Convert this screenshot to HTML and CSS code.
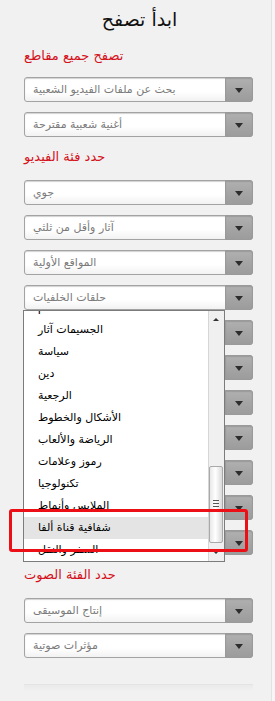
FILE: index.html
```html
<!DOCTYPE html>
<html lang="ar">
<head>
<meta charset="utf-8">
<title>ابدأ تصفح</title>
<link rel="stylesheet" href="styles.css">
</head>
<body>
<div class="page">
  <h1 class="title">ابدأ تصفح</h1>
  <div class="panel">
    <h2 class="heading first">تصفح جميع مقاطع</h2>
    <div class="select"><span class="value">بحث عن ملفات الفيديو الشعبية</span><span class="arrow"></span></div>
    <div class="select"><span class="value">أغنية شعبية مقترحة</span><span class="arrow"></span></div>

    <h2 class="heading">حدد فئة الفيديو</h2>
    <div class="select"><span class="value">جوي</span><span class="arrow"></span></div>
    <div class="select"><span class="value">آثار وأقل من ثلثي</span><span class="arrow"></span></div>
    <div class="select"><span class="value">المواقع الأولية</span><span class="arrow"></span></div>
    <div class="select open"><span class="value">حلقات الخلفيات</span><span class="arrow"></span>
      <div class="dropdown">
        <div class="list">
          <div class="item">الطعام</div>
          <div class="item">الجسيمات آثار</div>
          <div class="item">سياسة</div>
          <div class="item">دين</div>
          <div class="item">الرجعية</div>
          <div class="item">الأشكال والخطوط</div>
          <div class="item">الرياضة والألعاب</div>
          <div class="item">رموز وعلامات</div>
          <div class="item">تكنولوجيا</div>
          <div class="item">الملابس وأنماط</div>
          <div class="item active">شفافية قناة ألفا</div>
          <div class="item">السفر والنقل</div>
        </div>
        <div class="scrollbar">
          <span class="up"></span>
          <span class="thumb"><span class="grip"></span></span>
          <span class="down"></span>
        </div>
      </div>
    </div>
    <div class="select"><span class="value"></span><span class="arrow"></span></div>
    <div class="select"><span class="value"></span><span class="arrow"></span></div>
    <div class="select"><span class="value"></span><span class="arrow"></span></div>
    <div class="select"><span class="value"></span><span class="arrow"></span></div>
    <div class="select"><span class="value"></span><span class="arrow"></span></div>
    <div class="select"><span class="value"></span><span class="arrow"></span></div>
    <div class="select"><span class="value"></span><span class="arrow"></span></div>

    <h2 class="heading">حدد الفئة الصوت</h2>
    <div class="select"><span class="value">إنتاج الموسيقى</span><span class="arrow"></span></div>
    <div class="select"><span class="value">مؤثرات صوتية</span><span class="arrow"></span></div>

    <div class="footer-box"></div>
  </div>
  <div class="annotation"></div>
</div>
</body>
</html>
```

FILE: styles.css
```css
html {
  background: #f6f6f6;
}
body {
  margin: 0;
  font-family: "DejaVu Sans", "Noto Sans", sans-serif;
}
.page {
  position: relative;
  width: 271px;
  min-height: 701px;
  background: #f1f1f1;
  border-right: 1px solid #e2e2e2;
  overflow: hidden;
}
.title {
  margin: 0;
  padding: 7px 0 0 8px;
  font-size: 19px;
  line-height: 24px;
  font-weight: normal;
  color: #111;
  text-align: center;
}
.panel {
  padding-left: 24px;
  width: 229px;
}
.heading {
  margin: 2px 0 13px;
  font-size: 13px;
  line-height: 20px;
  font-weight: normal;
  color: #d4121c;
}
.heading.first {
  margin-top: 15px;
  margin-bottom: 11px;
}
.select {
  position: relative;
  display: flex;
  height: 25px;
  margin-bottom: 10px;
  box-sizing: border-box;
  border: 1px solid #a3a3a3;
  border-radius: 3px;
  background: linear-gradient(#ffffff, #ffffff 60%, #f2f2f2);
  box-shadow: inset 0 1px 1px rgba(0, 0, 0, 0.18);
}
.value {
  flex: 1;
  padding-left: 8px;
  font-size: 11px;
  line-height: 23px;
  color: #7a7a7a;
  white-space: nowrap;
  overflow: hidden;
}
.arrow {
  position: relative;
  width: 26px;
  margin: -1px -1px -1px 0;
  border: 1px solid #9a9a9a;
  border-radius: 0 3px 3px 0;
  background: linear-gradient(#b0b0b0, #a5a5a5 50%, #9c9c9c);
  box-shadow: inset 0 1px 1px rgba(0, 0, 0, 0.12);
}
.arrow::after {
  content: "";
  position: absolute;
  left: 9px;
  top: 10px;
  border-left: 4px solid transparent;
  border-right: 4px solid transparent;
  border-top: 5px solid #2d2d2d;
}
.dropdown {
  position: absolute;
  z-index: 5;
  left: -2px;
  top: 24px;
  width: 202px;
  height: 252px;
  box-sizing: border-box;
  border: 1px solid #7b7b7b;
  background: #ffffff;
  display: flex;
  overflow: hidden;
}
.list {
  flex: 1;
  margin-top: -14px;
}
.item {
  height: 22px;
  line-height: 22px;
  padding-left: 14px;
  font-size: 11px;
  color: #000;
  white-space: nowrap;
}
.item.active {
  background: #e4e4e4;
}
.scrollbar {
  position: relative;
  width: 15px;
  border-left: 1px solid #d6d6d6;
  background: #f0f0f0;
}
.up,
.down {
  position: absolute;
  left: 4px;
  border-left: 3px solid transparent;
  border-right: 3px solid transparent;
}
.up {
  top: 7px;
  border-bottom: 3px solid #333;
}
.down {
  bottom: 7px;
  border-top: 3px solid #333;
}
.thumb {
  position: absolute;
  left: 0;
  top: 155px;
  width: 14px;
  height: 77px;
  box-sizing: border-box;
  border: 1px solid #a9a9a9;
  border-radius: 2px;
  background: linear-gradient(90deg, #e8e8e8, #ffffff 45%, #dadada);
}
.grip {
  position: absolute;
  left: 3px;
  top: 33px;
  width: 6px;
  height: 5px;
  border-top: 1px solid #555;
  border-bottom: 1px solid #555;
}
.grip::after {
  content: "";
  position: absolute;
  left: 0;
  top: 2px;
  width: 6px;
  border-top: 1px solid #555;
}
.footer-box {
  margin-top: 26px;
  height: 6px;
  border-top: 1px solid #e4e4e4;
  background: linear-gradient(#eaeaea, #f1f1f1);
}
.annotation {
  position: absolute;
  z-index: 10;
  left: 9px;
  top: 509px;
  width: 239px;
  height: 43px;
  box-sizing: border-box;
  border: 3px solid #ec1016;
  border-radius: 3px;
}
```
